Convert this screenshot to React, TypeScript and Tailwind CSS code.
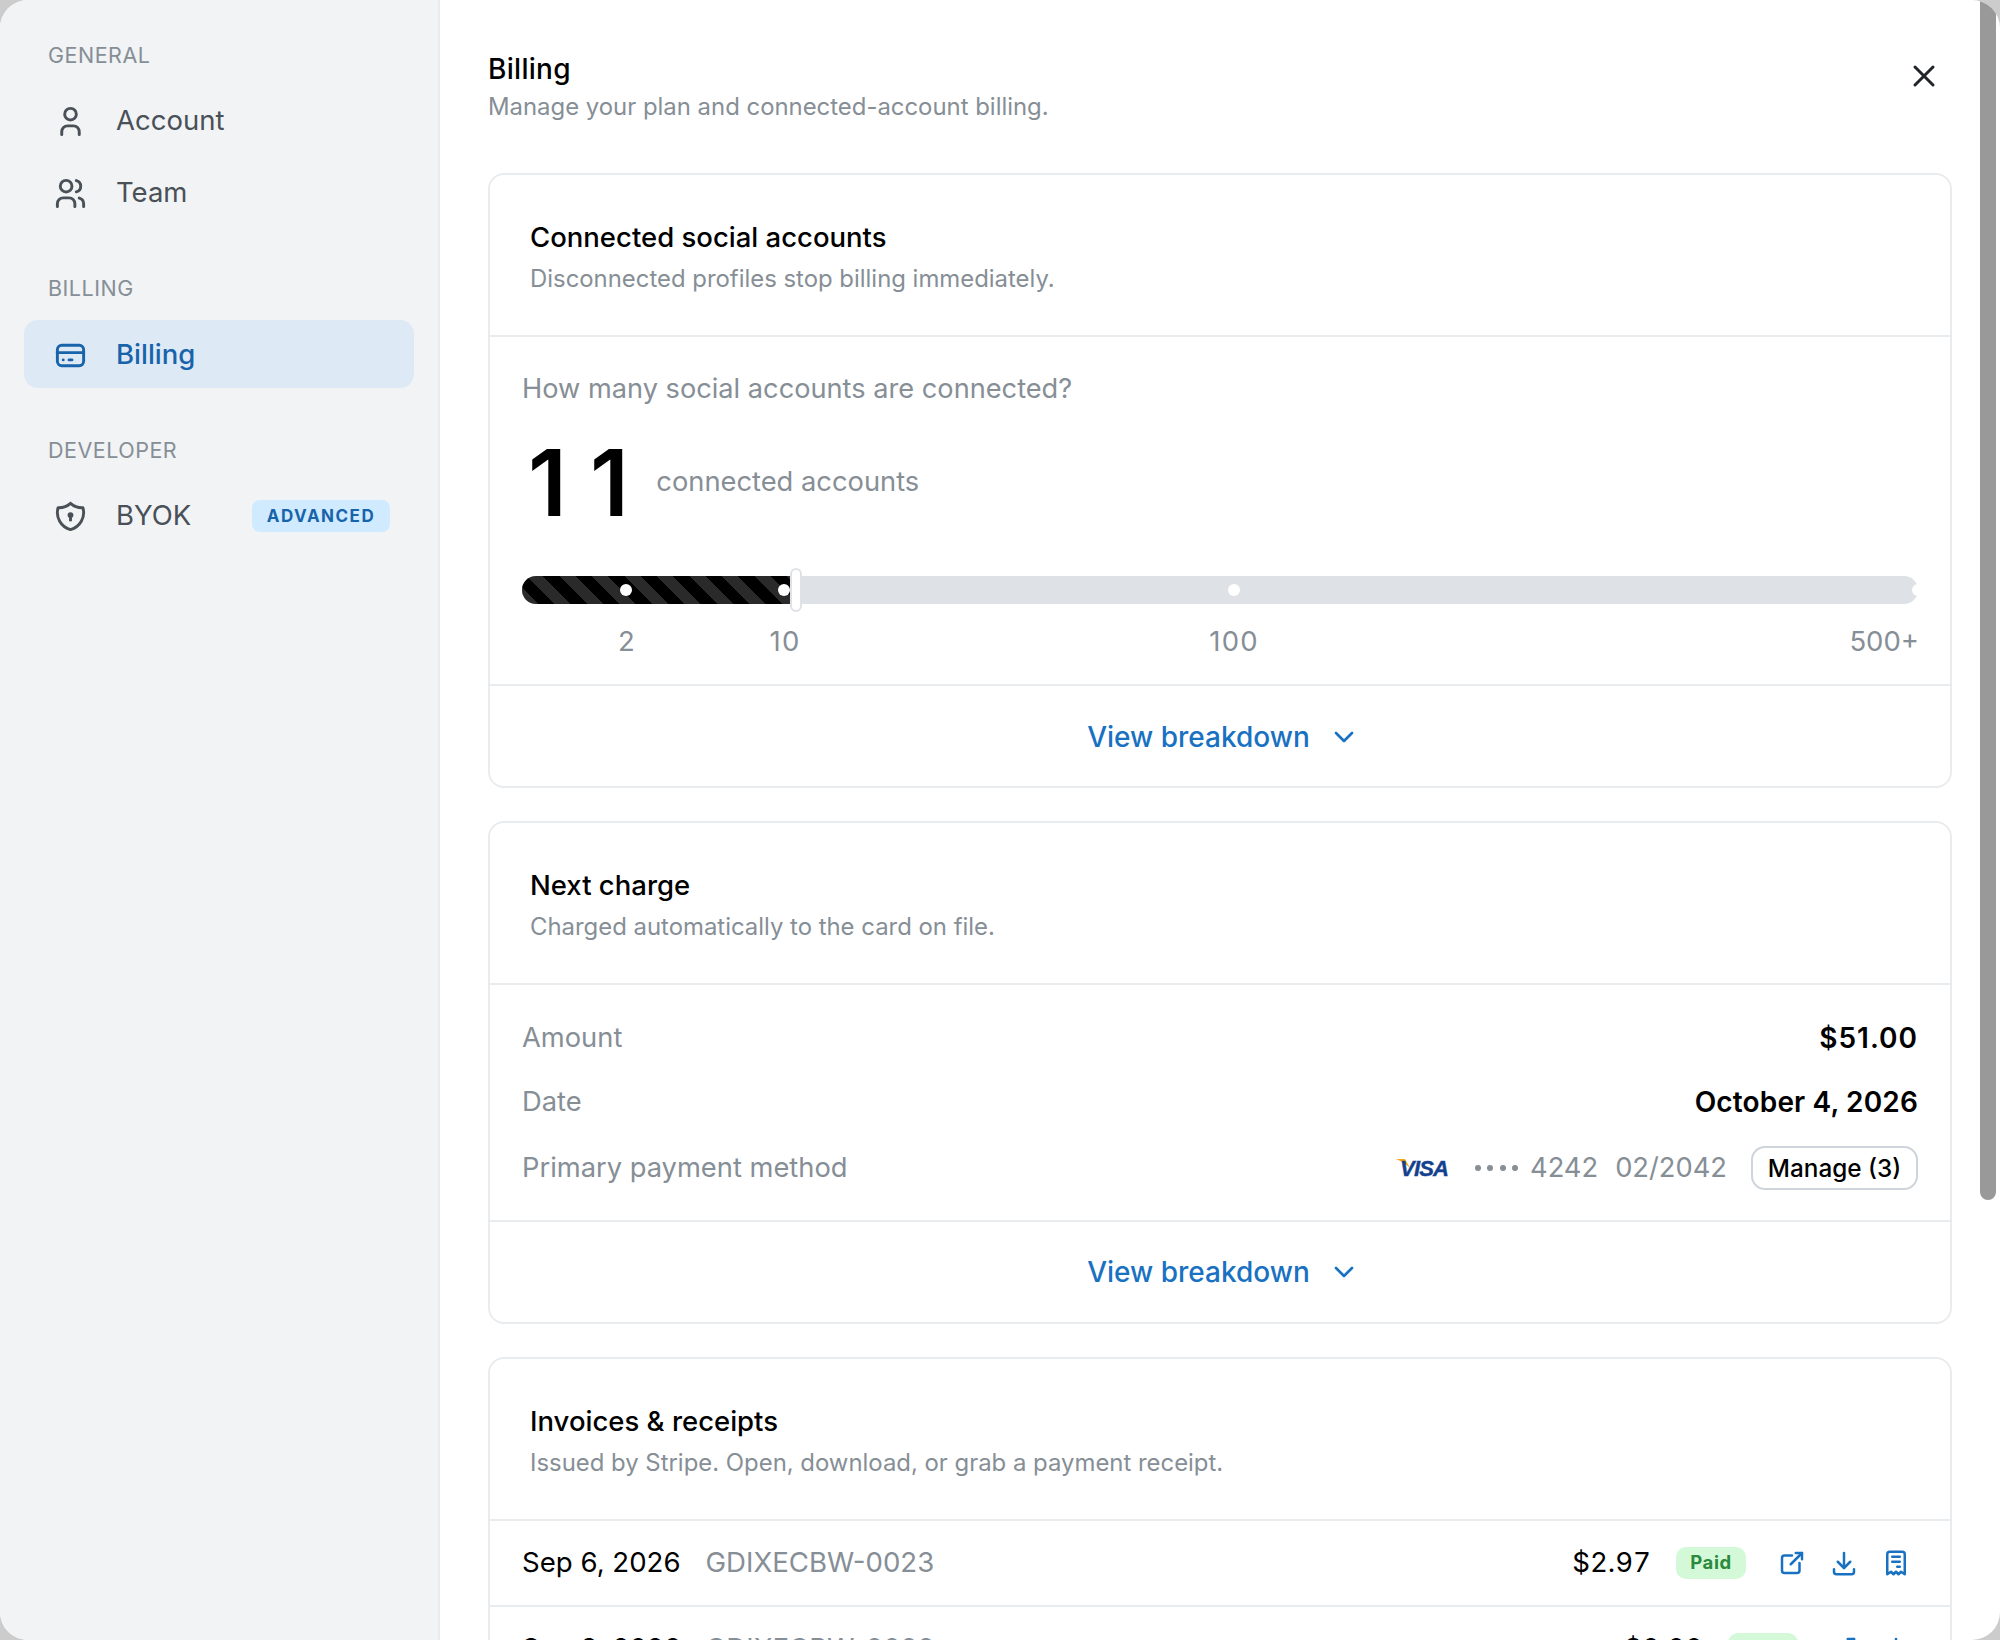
import { TbChevronDown, TbCreditCard, TbDownload, TbExternalLink, TbReceipt, TbShieldLock, TbUser, TbUsers, TbX } from "react-icons/tb";

function NavLabel({ children, className }: { children: string; className?: string }) {
  return <div className={`pl-[48px] text-[21.5px] leading-[24px] tracking-[0.5px] text-[#868e96] ${className ?? ""}`}>{children}</div>;
}

function NavRow({ icon, label, active, badge }: { icon: React.ReactNode; label: string; active?: boolean; badge?: string }) {
  return (
    <div
      className={`mx-[24px] flex h-[68px] items-center gap-[28.5px] rounded-[14px] pt-[2px] pl-[28.5px] text-[27.5px] ${
        active ? "bg-[#dee9f6] font-medium text-[#1864ab]" : "text-[#495057]"
      }`}
    >
      {icon}
      <span>{label}</span>
      {badge ? (
        <span className="ml-[32px] rounded-[8px] bg-[#d0ebff] px-[15px] py-[5px] text-[17px] leading-[22px] font-bold tracking-[1.5px] text-[#1864ab]">
          {badge}
        </span>
      ) : null}
    </div>
  );
}

function CardHead({ title, sub }: { title: string; sub: string }) {
  return (
    <div className="border-b-2 border-[#e9ecef] px-[40px] pt-[44px] pb-[40px]">
      <div className="text-[27.5px] leading-[36px] font-medium text-black">{title}</div>
      <div className="mt-[8px] text-[23.9px] leading-[32px] text-[#868e96]">{sub}</div>
    </div>
  );
}

function Breakdown() {
  return (
    <div className="flex h-[102px] items-center justify-center gap-[18px] border-t-2 border-[#e9ecef] pt-[1px] pl-[7px] text-[28px] font-medium text-[#1971c2]">
      View breakdown
      <TbChevronDown size={32} />
    </div>
  );
}

function Visa() {
  return (
    <svg width="54" height="18" viewBox="0 0 54 18">
      <path d="M0 0H9L14 9C10 5 5 2 0 0z" fill="#f7a81b" />
      <text x="4" y="17" fontFamily="Liberation Sans" fontSize="22" fontWeight="700" fontStyle="italic" fill="#14418f" stroke="#14418f" strokeWidth="0.4" textLength="49">
        VISA
      </text>
    </svg>
  );
}

function Row({ date, id, amount, receipt }: { date: string; id: string; amount: string; receipt?: boolean }) {
  return (
    <div className="flex h-[86px] items-center border-b-2 border-[#e9ecef] px-[32px] text-[27.6px]">
      <span className="text-black">{date}</span>
      <span className="ml-[25px] text-[#868e96]">{id}</span>
      <span className="ml-auto text-black tabular-nums">{amount}</span>
      <span className="ml-[25px] flex h-[32px] w-[70px] items-center justify-center rounded-[10px] bg-[#d3f9d8] text-[18.5px] font-bold tracking-[0.6px] text-[#2b8a3e]">
        Paid
      </span>
      <span className="mr-[7px] ml-[31px] flex gap-[22px] text-[#1971c2]">
        <TbExternalLink size={30} />
        <TbDownload size={30} />
        {receipt ? <TbReceipt size={30} /> : null}
      </span>
    </div>
  );
}

export default function App() {
  return (
    <div className="h-[1640px] w-[2000px] overflow-hidden bg-[#cccccc] font-['Inter','Liberation_Sans',sans-serif]">
      <div className="relative flex h-full overflow-hidden rounded-[28px] bg-white">
        <aside className="w-[440px] shrink-0 border-r-2 border-[#e9ecef] bg-[#f1f3f5] pt-[43px]">
          <NavLabel>GENERAL</NavLabel>
          <div className="mt-[19px]">
            <NavRow icon={<TbUser size={35} />} label="Account" />
          </div>
          <div className="mt-[4px]">
            <NavRow icon={<TbUsers size={35} />} label="Team" />
          </div>
          <NavLabel className="mt-[50px]">BILLING</NavLabel>
          <div className="mt-[20px]">
            <NavRow active icon={<TbCreditCard size={35} />} label="Billing" />
          </div>
          <NavLabel className="mt-[50px]">DEVELOPER</NavLabel>
          <div className="mt-[19px]">
            <NavRow icon={<TbShieldLock size={35} />} label="BYOK" badge="ADVANCED" />
          </div>
        </aside>

        <main className="min-w-0 flex-1 pr-[48px] pl-[48px]">
          <div className="relative h-[173px] pt-[51px]">
            <div className="text-[28px] leading-[36px] font-medium tracking-[0.3px] text-black">Billing</div>
            <div className="mt-[4px] text-[23.9px] leading-[32px] text-[#868e96]">Manage your plan and connected-account billing.</div>
            <TbX className="absolute top-[58px] right-[10px] text-[#212529]" size={36} />
          </div>

          <section className="rounded-[16px] border-2 border-[#e9ecef]">
            <CardHead title="Connected social accounts" sub="Disconnected profiles stop billing immediately." />
            <div className="px-[32px] pt-[34px] pb-[24px]">
              <div className="text-[27.2px] leading-[36px] text-[#868e96]">How many social accounts are connected?</div>
              <div className="mt-[20px] flex items-center gap-[4.5px]">
                <span className="pl-[6px] text-[92px] leading-[112px] font-semibold tracking-[23px] text-black">11</span>
                <span className="pb-[2px] text-[27.3px] text-[#868e96]">connected accounts</span>
              </div>
              <div className="relative mt-[37px] h-[28px] rounded-[14px] bg-[#dee2e6]">
                <div className="absolute inset-y-0 left-0 w-[268px] rounded-l-[14px] bg-[repeating-linear-gradient(45deg,#2a2a2a_0,#2a2a2a_11.5px,#000_11.5px,#000_23px)]" />
                <span className="absolute top-[8px] left-[98px] size-[12px] rounded-full bg-white" />
                <span className="absolute top-[8px] left-[256px] size-[12px] rounded-full bg-white" />
                <span className="absolute top-[8px] left-[706px] size-[12px] rounded-full bg-white" />
                <span className="absolute top-[8px] right-[-6px] size-[12px] rounded-full bg-white" />
                <span className="absolute top-[-8px] left-[268px] h-[44px] w-[12px] rounded-full border-2 border-[#dee2e6] bg-white" />
              </div>
              <div className="relative mt-[19px] mb-[1px] h-[36px] text-[27.5px] leading-[36px] tracking-[1.2px] text-[#868e96]">
                <span className="absolute left-[105px] -translate-x-1/2">2</span>
                <span className="absolute left-[263px] -translate-x-1/2">10</span>
                <span className="absolute left-[712px] -translate-x-1/2">100</span>
                <span className="absolute right-[-1px] tracking-normal">500+</span>
              </div>
            </div>
            <Breakdown />
          </section>

          <section className="mt-[33px] rounded-[16px] border-2 border-[#e9ecef]">
            <CardHead title="Next charge" sub="Charged automatically to the card on file." />
            <div className="px-[32px] pt-[35px] pb-[29.5px] text-[27.3px] leading-[36px] text-[#868e96]">
              <div className="flex justify-between">
                <span>Amount</span>
                <span className="text-[28px] font-semibold tracking-[1px] text-black">$51.00</span>
              </div>
              <div className="mt-[28px] flex justify-between">
                <span>Date</span>
                <span className="text-[28px] font-semibold tracking-[0.15px] text-black">October 4, 2026</span>
              </div>
              <div className="mt-[26px] flex items-center">
                <span>Primary payment method</span>
                <span className="ml-auto flex"><Visa /></span>
                <span className="ml-[25px] flex gap-[6.5px]">
                  <span className="size-[6px] rounded-full bg-[#868e96]" />
                  <span className="size-[6px] rounded-full bg-[#868e96]" />
                  <span className="size-[6px] rounded-full bg-[#868e96]" />
                  <span className="size-[6px] rounded-full bg-[#868e96]" />
                </span>
                <span className="ml-[12px]">4242</span>
                <span className="ml-[17px]">02/2042</span>
                <span className="ml-[24px] flex h-[44px] w-[167px] items-center justify-center rounded-[14px] border-2 border-[#ced4da] text-[24.3px] font-medium text-black">
                  Manage (3)
                </span>
              </div>
            </div>
            <Breakdown />
          </section>

          <section className="mt-[33px] rounded-t-[16px] border-2 border-[#e9ecef]">
            <CardHead title="Invoices & receipts" sub="Issued by Stripe. Open, download, or grab a payment receipt." />
            <Row date="Sep 6, 2026" id="GDIXECBW-0023" amount="$2.97" receipt />
            <Row date="Sep 3, 2026" id="GDIXECBW-0022" amount="$0.00" />
          </section>
        </main>

        <div className="absolute top-0 right-[4px] h-[1200px] w-[16px] rounded-b-full bg-[#999999]" />
      </div>
    </div>
  );
}
